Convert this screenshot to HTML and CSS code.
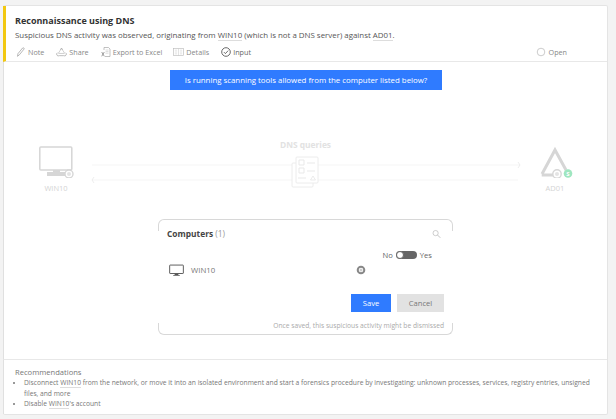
FILE: index.html
```html
<!DOCTYPE html>
<html lang="en">
<head>
<meta charset="utf-8">
<title>Reconnaissance using DNS</title>
<link rel="stylesheet" href="styles.css">
</head>
<body>
<div class="card">
  <header class="head">
    <h1 class="title">Reconnaissance using DNS</h1>
    <p class="desc">Suspicious DNS activity was observed, originating from <span class="ent">WIN10</span> (which is not a DNS server) against <span class="ent">AD01</span>.</p>
    <div class="toolbar">
      <span class="tool t-note"><svg class="ico" viewBox="0 0 10 10"><path d="M1.500 9.300 2 6.600 6.600 1a.9.9 0 0 1 1.400 1.100L3.400 7.800z" fill="none" stroke="#9a9a9a" stroke-width=".7"/></svg>Note</span>
      <span class="tool t-share"><svg class="ico wide" viewBox="0 0 12 10"><path d="M6 1 2.500 6.500M6 1l3.500 5.500M2.800 6.600h6.400" fill="none" stroke="#aaa" stroke-width=".6"/><path d="M4.500 2.200a2 2 0 0 1 3 0M1.600 5.800a1.800 1.800 0 1 0 2 3.200h4.800a1.800 1.800 0 1 0 2-3.200" fill="none" stroke="#999" stroke-width=".7"/></svg>Share</span>
      <span class="tool t-excel"><svg class="ico" viewBox="0 0 10 10"><path d="M3 3V.5h4.500L9 2v7.500H4" fill="none" stroke="#999" stroke-width=".6"/><path d="M4.500 3h3M4.500 4.600h3M4.500 6.200h3" stroke="#bbb" stroke-width=".5"/><path d="m.7 5 2.600 4.300M3.300 5 .7 9.300" stroke="#777" stroke-width=".7"/></svg>Export to Excel</span>
      <span class="tool t-details"><svg class="ico wide" viewBox="0 0 12 10"><rect x=".5" y="1" width="11" height="8" fill="none" stroke="#bbb" stroke-width=".7"/><path d="M6 1v8M2 3h2.500M2 5h2.500M2 7h2.500M7.500 3H10M7.500 5H10M7.500 7H10" stroke="#ccc" stroke-width=".6"/></svg>Details</span>
      <span class="tool t-input"><svg class="ico" viewBox="0 0 10 10"><circle cx="5" cy="5" r="4.300" fill="none" stroke="#444" stroke-width=".8"/><path d="m2.900 5.100 1.500 1.500 2.800-3" fill="none" stroke="#444" stroke-width=".8"/></svg>Input</span>
      <span class="tool t-open"><svg class="ico" viewBox="0 0 10 10"><circle cx="5" cy="5" r="3.800" fill="none" stroke="#aaa" stroke-width=".6"/></svg>Open</span>
    </div>
  </header>

  <main class="main">
    <div class="banner">Is running scanning tools allowed from the computer listed below?</div>

    <section class="diagram">
      <div class="node">
        <svg class="node-ico" viewBox="0 0 36 32">
          <rect x="1.800" y="1" width="32" height="23" rx="1" fill="none" stroke="#d6d6d6" stroke-width="1.500"/>
          <path d="M15 24h7v2h-7zM9 26h18v4H9z" fill="#d6d6d6"/>
          <circle cx="31" cy="28" r="4" fill="#fff" stroke="#d6d6d6" stroke-width="1.400"/>
          <circle cx="31" cy="28" r="2" fill="#e4e4e4"/>
        </svg>
        <span class="node-label">WIN10</span>
      </div>
      <div class="flow">
        <div class="flow-title">DNS queries</div>
        <svg class="flow-art" viewBox="0 0 430 40">
          <path d="M1 14h428M1 29h426" stroke="#f3f3f3" stroke-width=".8" fill="none"/>
          <path d="m3 26-2 3 2 3M427 11l2 3-2 3" stroke="#e8e8e8" stroke-width=".8" fill="none"/>
          <g fill="#fff" stroke="#ececec" stroke-width="1">
            <rect x="201" y="12" width="21" height="24" rx="1"/>
            <rect x="205" y="6" width="22" height="26" rx="1"/>
          </g>
          <path d="M208 9h5v5h-5zM208 17h5v5h-5zM216 12h8M216 20h8M207 27h8" fill="none" stroke="#e6e6e6" stroke-width=".9"/>
          <path d="m219.500 29 2.500-4 2.500 4z" fill="none" stroke="#e6e6e6" stroke-width=".8"/>
        </svg>
      </div>
      <div class="node">
        <svg class="node-ico" viewBox="0 0 36 32">
          <path d="M4.700 29H16M5 28 18 4l11 20" fill="none" stroke="#d6d6d6" stroke-width="3"/>
          <circle cx="20" cy="28" r="4.200" fill="#fff" stroke="#d6d6d6" stroke-width="1.400"/>
          <circle cx="20" cy="28" r="2" fill="#e4e4e4"/>
          <circle cx="31" cy="27.500" r="4.300" fill="#9fe6c0"/>
          <text class="badge-s" x="31" y="29.800">S</text>
        </svg>
        <span class="node-label">AD01</span>
      </div>
    </section>

    <section class="panel">
      <div class="panel-head">
        <h2 class="panel-title">Computers <span class="count">(1)</span></h2>
        <svg class="search" viewBox="0 0 10 10"><circle cx="4" cy="4" r="2.900" fill="none" stroke="#bbb" stroke-width=".8"/><path d="m6.200 6.200 3 3" stroke="#bbb" stroke-width="1"/></svg>
      </div>
      <div class="toggle-row">
        <span>No</span><span class="toggle"><span class="knob"></span></span><span>Yes</span>
      </div>
      <div class="row">
        <svg class="pc" viewBox="0 0 16 13"><rect x=".7" y=".7" width="14.600" height="9" rx=".5" fill="none" stroke="#555" stroke-width="1"/><path d="M6 10h4v1.200H6zM4.500 11.200h7v1h-7z" fill="#555"/></svg>
        <span class="row-name">WIN10</span>
        <svg class="gear" viewBox="0 0 10 10"><circle cx="5" cy="5" r="3.300" fill="#fff" stroke="#888" stroke-width="2"/><circle cx="5" cy="5" r="1.500" fill="#ccc"/></svg>
      </div>
      <div class="actions">
        <button class="btn btn-save" type="button">Save</button>
        <button class="btn btn-cancel" type="button">Cancel</button>
      </div>
      <div class="note">Once saved, this suspicious activity might be dismissed</div>
    </section>
  </main>

  <footer class="foot">
    <div class="foot-title">Recommendations</div>
    <ul class="recs">
      <li>Disconnect <span class="ent">WIN10</span> from the network, or move it into an isolated environment and start a forensics procedure by investigating: unknown processes, services, registry entries, unsigned files, and more</li>
      <li>Disable <span class="ent">WIN10</span>'s account</li>
    </ul>
  </footer>
</div>
</body>
</html>
```
FILE: styles.css
```css
* { box-sizing: border-box; }
html, body { height: 100%; }
body {
  margin: 0;
  padding: 5px 8px 4px 3px;
  background: #f3f3f3;
  font-family: "Open Sans", "Noto Sans", sans-serif;
  color: #666;
  overflow: hidden;
}
.card {
  height: 410px;
  display: flex;
  flex-direction: column;
  background: #fff;
  border: 1px solid #e4e4e4;
  border-left: 0;
  border-radius: 2px;
}
.head {
  height: 56px;
  flex: none;
  padding: 9px 40px 0 9px;
  border-left: 3px solid #f2c811;
  border-bottom: 1px solid #e8e8e8;
}
.title {
  margin: 0;
  font-size: 9px;
  line-height: 12px;
  font-weight: 700;
  color: #333;
}
.desc {
  margin: 2px 0 0;
  font-size: 7.9px;
  line-height: 12px;
  color: #555;
}
.ent { border-bottom: 1px solid #ddd; }
.toolbar {
  display: flex;
  align-items: center;
  margin-top: 5px;
  height: 12px;
  font-size: 7.2px;
  color: #888;
}
.tool { display: flex; align-items: center; gap: 2px; }
.ico { width: 10px; height: 10px; flex: none; }
.ico.wide { width: 11px; }
.t-note { margin-left: 1px; }
.t-share { margin-left: 12px; }
.t-excel { margin-left: 12px; }
.t-details { margin-left: 11px; }
.t-input { margin-left: 12px; color: #666; }
.t-open { margin-left: auto; gap: 3px; }

.main {
  flex: 1;
  min-height: 0;
  display: flex;
  flex-direction: column;
  border-left: 1px solid #e0e0e0;
  padding-top: 8px;
}
.banner {
  align-self: flex-start;
  margin-left: 166px;
  width: 272px;
  height: 20px;
  background: #2f7bff;
  color: #fff;
  font-size: 7.85px;
  line-height: 20px;
  text-align: center;
}
.diagram {
  display: flex;
  align-items: flex-start;
  margin-top: 49px;
  padding: 0 34px;
  height: 55px;
}
.node {
  width: 36px;
  flex: none;
  margin-top: 7px;
  display: flex;
  flex-direction: column;
  align-items: center;
}
.node-ico { width: 36px; height: 32px; display: block; }
.node-label {
  margin-top: 5px;
  font-size: 7.5px;
  line-height: 10px;
  color: #d4d4d4;
}
.flow {
  flex: 1;
  display: flex;
  flex-direction: column;
  align-items: center;
}
.flow-title {
  font-size: 8.4px;
  line-height: 12px;
  font-weight: 700;
  color: #e2e2e2;
}
.flow-art { width: 430px; height: 40px; display: block; }
.badge-s {
  font-size: 6px;
  font-weight: 700;
  fill: #fff;
  text-anchor: middle;
}

.panel {
  align-self: flex-start;
  margin: 25px 0 0 154px;
  width: 295px;
  height: 116px;
  display: flex;
  flex-direction: column;
  padding: 0 9px;
  position: relative;
}
.panel::before, .panel::after {
  content: "";
  position: absolute;
  left: 0;
  right: 0;
  height: 11px;
  border: 1px solid #d8d8d8;
}
.panel::before { top: 0; border-bottom: 0; border-radius: 6px 6px 0 0; }
.panel::after { bottom: 0; border-top: 0; border-radius: 0 0 6px 6px; }
.panel-head {
  display: flex;
  align-items: center;
  justify-content: space-between;
  height: 12px;
  margin-top: 9px;
  padding-right: 3px;
}
.panel-title {
  margin: 0;
  font-size: 8.4px;
  line-height: 12px;
  font-weight: 700;
  color: #444;
}
.count { font-weight: 400; color: #999; }
.search { width: 9px; height: 10px; }
.toggle-row {
  display: flex;
  align-items: center;
  justify-content: flex-end;
  gap: 3px;
  height: 10px;
  margin-top: 10px;
  padding-right: 12px;
  font-size: 7.6px;
  color: #666;
}
.toggle {
  width: 21px;
  height: 8px;
  border-radius: 4px;
  background: #666;
  display: flex;
  align-items: center;
}
.knob {
  width: 8px;
  height: 8px;
  border-radius: 50%;
  background: #fff;
  border: 1px solid #666;
}
.row {
  display: flex;
  align-items: center;
  height: 14px;
  margin-top: 3px;
}
.pc { width: 15px; height: 13px; flex: none; margin-left: 2px; }
.row-name {
  margin-left: 7px;
  width: 165px;
  font-size: 7.8px;
  color: #777;
}
.gear { width: 10px; height: 10px; flex: none; }
.actions {
  display: flex;
  justify-content: flex-end;
  gap: 6px;
  margin-top: 17px;
}
.btn {
  height: 18px;
  border: 0;
  padding: 0;
  font-family: inherit;
  font-size: 7.6px;
}
.btn-save { width: 40px; background: #2f7bff; color: #fff; }
.btn-cancel { width: 47px; background: #e2e2e2; color: #777; }
.note {
  margin-top: 9px;
  text-align: right;
  font-size: 6.7px;
  line-height: 10px;
  color: #aaa;
}

.foot {
  flex: none;
  height: 55px;
  padding: 7px 12px 0 11px;
  border-left: 1px solid #e0e0e0;
  border-top: 1px solid #e8e8e8;
}
.foot-title {
  font-size: 7.6px;
  line-height: 11px;
  color: #777;
}
.recs {
  margin: 0;
  padding: 0 0 0 9px;
  font-size: 6.7px;
  line-height: 10.5px;
  color: #777;
}
```
